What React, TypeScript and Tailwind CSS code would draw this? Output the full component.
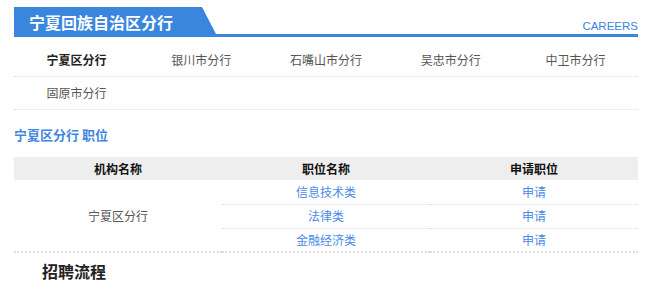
import React from "react";

const branches1 = ["宁夏区分行", "银川市分行", "石嘴山市分行", "吴忠市分行", "中卫市分行"];
const jobs = ["信息技术类", "法律类", "金融经济类"];

export default function App() {
  return (
    <div className="w-[663px] h-[289px] bg-white overflow-hidden font-['Noto_Sans_CJK_SC','Noto_Sans',sans-serif]">
      <div className="ml-[14px] w-[624px] pt-[7px]">
        {/* Header */}
        <div className="flex items-end justify-between border-b-[3px] border-[#3a86dc]">
          <div className="h-[27px] w-[202px] bg-[#3a86dc] [clip-path:polygon(0_0,188px_0,100%_100%,0_100%)] pl-[15px] pt-[7px]">
            <span className="block text-[16px] leading-[16px] font-bold text-white">宁夏回族自治区分行</span>
          </div>
          <span className="text-[11.5px] leading-[12px] mb-[2px] text-[#3a86dc] font-['Liberation_Sans',Arial,sans-serif]">CAREERS</span>
        </div>

        {/* Branches */}
        <div className="mt-[6px]">
          <div className="grid grid-cols-5 border-b border-dotted border-[#dedede]">
            {branches1.map((b, i) => (
              <div
                key={b}
                className={
                  "h-[33px] flex items-center justify-center text-[12px] leading-[12px] " +
                  (i === 0 ? "font-bold text-[#222]" : "text-[#555]")
                }
              >
                {b}
              </div>
            ))}
          </div>
          <div className="grid grid-cols-5 border-b border-dotted border-[#dedede]">
            <div className="h-[32px] flex items-center justify-center text-[12px] leading-[12px] text-[#555]">固原市分行</div>
          </div>
        </div>

        {/* Positions heading */}
        <div className="mt-[15px] text-[13px] leading-[20px] font-bold text-[#3e86e0]">宁夏区分行 职位</div>

        {/* Table */}
        <table className="mt-[12px] w-full border-collapse text-[12px] leading-[12px]">
          <thead>
            <tr className="bg-[#eeeeee] h-[23px]">
              <th className="w-1/3 font-bold text-[#111] text-center">机构名称</th>
              <th className="w-1/3 font-bold text-[#111] text-center">职位名称</th>
              <th className="w-1/3 font-bold text-[#111] text-center">申请职位</th>
            </tr>
          </thead>
          <tbody>
            {jobs.map((j, i) => {
              const last = i === jobs.length - 1;
              const cellBorder = last
                ? "border-b-2 border-dotted border-[#dedede]"
                : "border-b border-dotted border-[#dedede]";
              return (
                <tr key={j} className="h-[24px]">
                  {i === 0 && (
                    <td
                      rowSpan={3}
                      className="text-center text-[#555] border-b-2 border-dotted border-[#dedede] align-middle"
                    >
                      宁夏区分行
                    </td>
                  )}
                  <td className={"text-center text-[#4a8ae6] " + cellBorder}>{j}</td>
                  <td className={"text-center text-[#4a8ae6] " + cellBorder}>申请</td>
                </tr>
              );
            })}
          </tbody>
        </table>

        {/* Recruitment process */}
        <div className="mt-[10px] pl-[28px] text-[16px] leading-[16px] font-bold text-[#222]">招聘流程</div>
      </div>
    </div>
  );
}
